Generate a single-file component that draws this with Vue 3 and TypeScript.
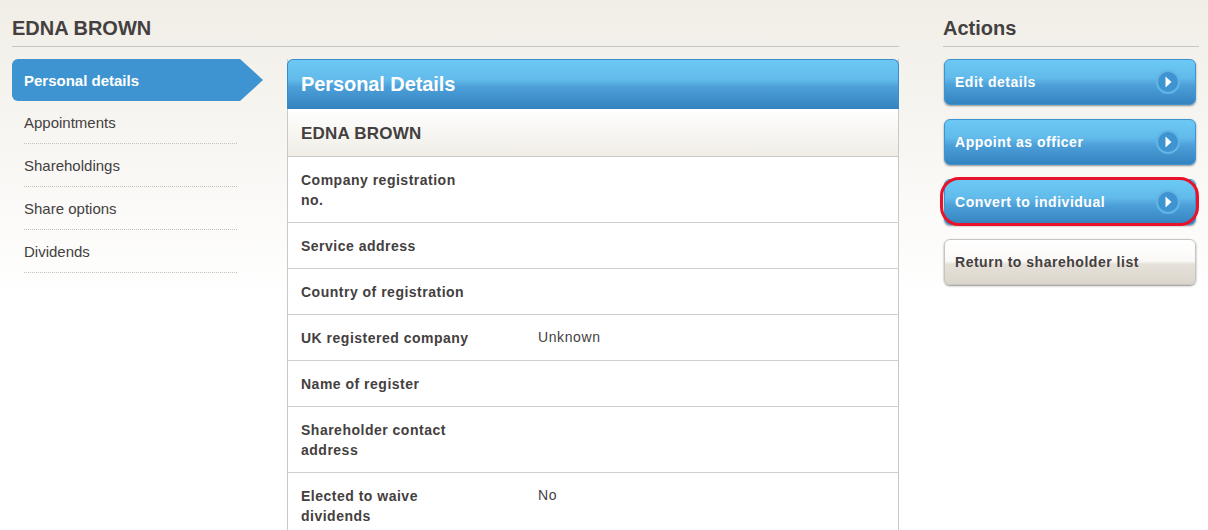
<script setup lang="ts">
const navItems = ["Personal details", "Appointments", "Shareholdings", "Share options", "Dividends"];

const rows = [
  { label: "Company registration no.", value: "" },
  { label: "Service address", value: "" },
  { label: "Country of registration", value: "" },
  { label: "UK registered company", value: "Unknown" },
  { label: "Name of register", value: "" },
  { label: "Shareholder contact address", value: "" },
  { label: "Elected to waive dividends", value: "No" },
];

const actions = [
  { label: "Edit details", kind: "blue" },
  { label: "Appoint as officer", kind: "blue" },
  { label: "Convert to individual", kind: "blue", marked: true },
  { label: "Return to shareholder list", kind: "plain" },
];
</script>

<template>
  <div class="page">
    <div class="main">
      <h2 class="heading">EDNA BROWN</h2>
      <div class="columns">
        <ul class="nav">
          <li v-for="(item, i) in navItems" :key="item" :class="['nav-item', { active: i === 0 }]">
            {{ item }}
          </li>
        </ul>
        <section class="panel">
          <h3 class="panel-title">Personal Details</h3>
          <div class="panel-name">EDNA BROWN</div>
          <div v-for="row in rows" :key="row.label" class="row">
            <div class="label">{{ row.label }}</div>
            <div class="value">{{ row.value }}</div>
          </div>
        </section>
      </div>
    </div>
    <aside class="side">
      <h2 class="heading">Actions</h2>
      <div class="actions">
        <a v-for="a in actions" :key="a.label" :class="['btn', a.kind, { marked: a.marked }]">
          <span>{{ a.label }}</span>
          <svg v-if="a.kind === 'blue'" class="arrow" width="26" height="26" viewBox="0 0 26 26">
            <circle cx="13" cy="13" r="11" fill="#3d94d0" stroke="#62b4e4" stroke-width="2" />
            <path d="M10.5 7.5 L16.5 13 L10.5 18.5 Z" fill="#fff" />
          </svg>
        </a>
      </div>
    </aside>
  </div>
</template>

<style scoped>
.page {
  display: flex;
  height: 530px;
  overflow: hidden;
  box-sizing: border-box;
  padding: 0 9px 0 12px;
  gap: 44px;
  font-family: "Liberation Sans", Arial, sans-serif;
  color: #444040;
  background: linear-gradient(to bottom, #f1eee7 0, #ffffff 300px);
}

.main {
  width: 887px;
}

.side {
  width: 256px;
}

.heading {
  margin: 0 0 12px;
  height: 47px;
  box-sizing: border-box;
  padding-top: 16px;
  font-size: 20px;
  line-height: 24px;
  font-weight: bold;
  border-bottom: 1px solid #c9c5be;
}

.columns {
  display: flex;
  gap: 25px;
}

.nav {
  list-style: none;
  margin: 0;
  padding: 0;
  width: 250px;
  flex: none;
}

.nav-item {
  width: 213px;
  margin-left: 12px;
  height: 43px;
  box-sizing: border-box;
  padding-top: 13px;
  font-size: 15px;
  line-height: 17px;
  border-bottom: 1px dotted #c4c1ba;
}

.nav-item.active {
  width: 251px;
  height: 42px;
  margin-left: 0;
  padding: 13px 0 0 12px;
  border-bottom: none;
  color: #fff;
  font-weight: bold;
  background: #3d94d0;
  border-radius: 6px 0 0 6px;
  clip-path: polygon(0 0, 228px 0, 100% 50%, 228px 100%, 0 100%);
}

.panel {
  flex: 1;
  border-left: 1px solid #c9c9c9;
  border-right: 1px solid #c9c9c9;
}

.panel-title {
  margin: 0 -1px;
  height: 50px;
  box-sizing: border-box;
  padding: 12px 13px 0;
  font-size: 20px;
  line-height: 24px;
  font-weight: bold;
  letter-spacing: -0.08px;
  color: #fff;
  border-radius: 6px 6px 0 0;
  border: 1px solid #3a8cc8;
  border-bottom: none;
  background: linear-gradient(to bottom, #6cc9f5 0, #62bbeb 40%, #4d9fd8 55%, #3383c0 100%);
}

.panel-name {
  height: 48px;
  box-sizing: border-box;
  padding: 15px 13px 0;
  font-size: 17px;
  line-height: 20px;
  font-weight: bold;
  letter-spacing: 0.2px;
  border-bottom: 1px solid #c9c9c9;
  background: linear-gradient(to bottom, #ffffff 0, #f0ede6 100%);
}

.row {
  display: flex;
  box-sizing: border-box;
  padding: 13px 13px 12px;
  background: #fff;
  border-bottom: 1px solid #cfcfcf;
  font-size: 14px;
  line-height: 20px;
}

.label {
  width: 237px;
  padding-right: 60px;
  box-sizing: border-box;
  font-weight: bold;
  letter-spacing: 0.5px;
}

.value {
  flex: 1;
  margin-top: -1px;
  letter-spacing: 0.6px;
}

.actions {
  display: flex;
  flex-direction: column;
  gap: 14px;
}

.btn {
  position: relative;
  display: flex;
  align-items: center;
  justify-content: space-between;
  width: 252px;
  height: 46px;
  margin-left: 1px;
  box-sizing: border-box;
  padding: 0 14px 0 10px;
  font-size: 14px;
  font-weight: bold;
  letter-spacing: 0.52px;
  border-radius: 6px;
  box-shadow: 0 1px 2px rgba(70, 70, 70, 0.6);
}

.btn.blue {
  color: #fff;
  border: 1px solid #3d94d0;
  background: linear-gradient(to bottom, #6cc9f5 0, #62bbeb 40%, #4d9fd8 58%, #3383c0 100%);
}

.btn.plain {
  color: #444040;
  border: 1px solid #c9c5be;
  background: linear-gradient(to bottom, #ffffff 0, #faf9f7 48%, #e6e1d8 55%, #dcd7cd 100%);
}

.btn.marked::after {
  content: "";
  position: absolute;
  inset: -3px -4px -2px -5px;
  border: 3px solid #e8132a;
  border-radius: 19px;
}

.arrow {
  flex: none;
}
</style>

<style>
html,
body {
  margin: 0;
  background: #fff;
}
</style>
